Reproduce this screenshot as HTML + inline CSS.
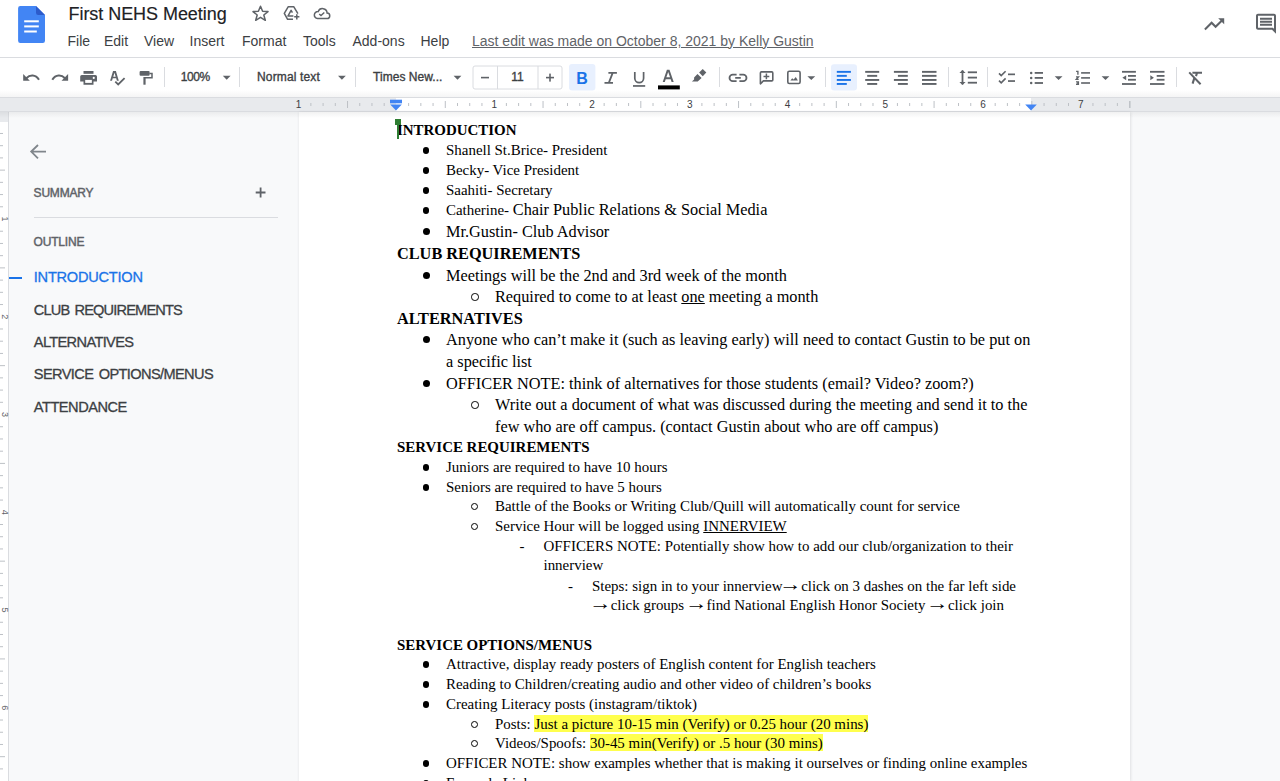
<!DOCTYPE html>
<html><head><meta charset="utf-8"><title>First NEHS Meeting</title>
<style>
html,body{margin:0;padding:0;}
body{width:1280px;height:781px;overflow:hidden;position:relative;background:#fff;}
.t{position:absolute;white-space:pre;line-height:0;}
.t b{font-weight:bold;}
.t u{text-decoration-thickness:1.3px;}
.hl{background:#ffff4d;padding-top:1px;}
.ar{display:inline-block;transform:translate(0.6px,-1.5px) scale(1.5,1.15);}
</style></head>
<body>
<div style="position:absolute;left:0px;top:0px;width:1280px;height:57px;background:#fff;"></div>
<div style="position:absolute;left:0px;top:57px;width:1280px;height:1px;background:#dadce0;"></div>
<div style="position:absolute;left:0px;top:58px;width:1280px;height:39px;background:#fff;"></div>
<div style="position:absolute;left:0px;top:97px;width:1280px;height:14px;background:#e8eaed;"></div>
<div style="position:absolute;left:0px;top:97px;width:1280px;height:1px;background:#dadce0;"></div>
<div style="position:absolute;left:396px;top:98px;width:635px;height:13px;background:#fff;"></div>
<div style="position:absolute;left:0px;top:111px;width:1280px;height:1px;background:#dadce0;"></div>
<div style="position:absolute;left:0px;top:112px;width:1280px;height:669px;background:#f8f9fa;"></div>
<div style="position:absolute;left:0px;top:112px;width:8px;height:669px;background:#fff;"></div>
<div style="position:absolute;left:0px;top:112px;width:8px;height:10px;background:#e8eaed;"></div>
<div style="position:absolute;left:8px;top:112px;width:1px;height:669px;background:#dadce0;"></div>
<div style="position:absolute;left:299px;top:112px;width:831px;height:669px;background:#fff;box-shadow:0 0 3px 0.5px rgba(60,64,67,.16);"></div>
<div style="position:absolute;left:0px;top:112px;width:1280px;height:6px;background:linear-gradient(rgba(60,64,67,.07),rgba(60,64,67,0));"></div>
<div style="position:absolute;left:0px;top:90px;width:1280px;height:7px;background:linear-gradient(rgba(60,64,67,0),rgba(60,64,67,.05));"></div>
<div id="hl-layer"></div>
<div class="t" style="left:397.00px;top:130.00px;font-size:14.94px;font-family:'Liberation Serif', serif;color:#000;font-weight:normal;"><b>INTRODUCTION</b></div>
<div style="position:absolute;left:422.70px;top:147.00px;width:6.8px;height:6.8px;border-radius:50%;background:#000"></div>
<div class="t" style="left:446.00px;top:150.00px;font-size:14.94px;font-family:'Liberation Serif', serif;color:#000;font-weight:normal;">Shanell St.Brice- President</div>
<div style="position:absolute;left:422.70px;top:167.00px;width:6.8px;height:6.8px;border-radius:50%;background:#000"></div>
<div class="t" style="left:446.00px;top:170.00px;font-size:14.94px;font-family:'Liberation Serif', serif;color:#000;font-weight:normal;">Becky- Vice President</div>
<div style="position:absolute;left:422.70px;top:187.00px;width:6.8px;height:6.8px;border-radius:50%;background:#000"></div>
<div class="t" style="left:446.00px;top:190.00px;font-size:14.94px;font-family:'Liberation Serif', serif;color:#000;font-weight:normal;">Saahiti- Secretary</div>
<div style="position:absolute;left:422.70px;top:207.00px;width:6.8px;height:6.8px;border-radius:50%;background:#000"></div>
<div class="t" style="left:446.00px;top:210.00px;font-size:14.94px;font-family:'Liberation Serif', serif;color:#000;font-weight:normal;">Catherine- <span style="font-size:16.29px">Chair Public Relations &amp; Social Media</span></div>
<div style="position:absolute;left:422.80px;top:228.00px;width:7.2px;height:7.2px;border-radius:50%;background:#000"></div>
<div class="t" style="left:446.00px;top:232.00px;font-size:16.29px;font-family:'Liberation Serif', serif;color:#000;font-weight:normal;">Mr.Gustin- Club Advisor</div>
<div class="t" style="left:397.00px;top:254.00px;font-size:16.29px;font-family:'Liberation Serif', serif;color:#000;font-weight:normal;"><b>CLUB REQUIREMENTS</b></div>
<div style="position:absolute;left:422.80px;top:272.00px;width:7.2px;height:7.2px;border-radius:50%;background:#000"></div>
<div class="t" style="left:446.00px;top:276.00px;font-size:16.29px;font-family:'Liberation Serif', serif;color:#000;font-weight:normal;">Meetings will be the 2nd and 3rd week of the month</div>
<div style="position:absolute;left:471.35px;top:293.25px;width:5.50px;height:5.50px;border-radius:50%;border:1px solid #000"></div>
<div class="t" style="left:495.00px;top:297.00px;font-size:16.29px;font-family:'Liberation Serif', serif;color:#000;font-weight:normal;">Required to come to at least <u>one</u> meeting a month</div>
<div class="t" style="left:397.00px;top:319.00px;font-size:16.29px;font-family:'Liberation Serif', serif;color:#000;font-weight:normal;"><b>ALTERNATIVES</b></div>
<div style="position:absolute;left:422.80px;top:336.00px;width:7.2px;height:7.2px;border-radius:50%;background:#000"></div>
<div class="t" style="left:446.00px;top:340.00px;font-size:16.29px;font-family:'Liberation Serif', serif;color:#000;font-weight:normal;">Anyone who can’t make it (such as leaving early) will need to contact Gustin to be put on</div>
<div class="t" style="left:446.00px;top:362.00px;font-size:16.29px;font-family:'Liberation Serif', serif;color:#000;font-weight:normal;">a specific list</div>
<div style="position:absolute;left:422.80px;top:380.00px;width:7.2px;height:7.2px;border-radius:50%;background:#000"></div>
<div class="t" style="left:446.00px;top:384.00px;font-size:16.29px;font-family:'Liberation Serif', serif;color:#000;font-weight:normal;">OFFICER NOTE: think of alternatives for those students (email? Video? zoom?)</div>
<div style="position:absolute;left:471.35px;top:401.25px;width:5.50px;height:5.50px;border-radius:50%;border:1px solid #000"></div>
<div class="t" style="left:495.00px;top:405.00px;font-size:16.29px;font-family:'Liberation Serif', serif;color:#000;font-weight:normal;">Write out a document of what was discussed during the meeting and send it to the</div>
<div class="t" style="left:495.00px;top:427.00px;font-size:16.29px;font-family:'Liberation Serif', serif;color:#000;font-weight:normal;">few who are off campus. (contact Gustin about who are off campus)</div>
<div class="t" style="left:397.00px;top:447.00px;font-size:14.94px;font-family:'Liberation Serif', serif;color:#000;font-weight:normal;"><b>SERVICE REQUIREMENTS</b></div>
<div style="position:absolute;left:422.70px;top:464.00px;width:6.8px;height:6.8px;border-radius:50%;background:#000"></div>
<div class="t" style="left:446.00px;top:467.00px;font-size:14.94px;font-family:'Liberation Serif', serif;color:#000;font-weight:normal;">Juniors are required to have 10 hours</div>
<div style="position:absolute;left:422.70px;top:484.00px;width:6.8px;height:6.8px;border-radius:50%;background:#000"></div>
<div class="t" style="left:446.00px;top:487.00px;font-size:14.94px;font-family:'Liberation Serif', serif;color:#000;font-weight:normal;">Seniors are required to have 5 hours</div>
<div style="position:absolute;left:471.25px;top:502.75px;width:4.90px;height:4.90px;border-radius:50%;border:1px solid #000"></div>
<div class="t" style="left:495.00px;top:506.00px;font-size:14.94px;font-family:'Liberation Serif', serif;color:#000;font-weight:normal;">Battle of the Books or Writing Club/Quill will automatically count for service</div>
<div style="position:absolute;left:471.25px;top:522.75px;width:4.90px;height:4.90px;border-radius:50%;border:1px solid #000"></div>
<div class="t" style="left:495.00px;top:526.00px;font-size:14.94px;font-family:'Liberation Serif', serif;color:#000;font-weight:normal;">Service Hour will be logged using <u>INNERVIEW</u></div>
<div class="t" style="left:519.50px;top:546.00px;font-size:14.94px;font-family:'Liberation Serif', serif;color:#000;font-weight:normal;">-</div>
<div class="t" style="left:543.50px;top:546.00px;font-size:14.94px;font-family:'Liberation Serif', serif;color:#000;font-weight:normal;">OFFICERS NOTE: Potentially show how to add our club/organization to their</div>
<div class="t" style="left:543.50px;top:565.00px;font-size:14.94px;font-family:'Liberation Serif', serif;color:#000;font-weight:normal;">innerview</div>
<div class="t" style="left:568.10px;top:586.00px;font-size:14.94px;font-family:'Liberation Serif', serif;color:#000;font-weight:normal;">-</div>
<div class="t" style="left:592.00px;top:586.00px;font-size:14.94px;font-family:'Liberation Serif', serif;color:#000;font-weight:normal;">Steps: sign in to your innerview<span class="ar">→</span> click on 3 dashes on the far left side</div>
<div class="t" style="left:592.00px;top:605.00px;font-size:14.94px;font-family:'Liberation Serif', serif;color:#000;font-weight:normal;"><span class="ar">→</span> click groups <span class="ar">→</span> find National English Honor Society <span class="ar">→</span> click join</div>
<div class="t" style="left:397.00px;top:645.00px;font-size:14.94px;font-family:'Liberation Serif', serif;color:#000;font-weight:normal;"><b>SERVICE OPTIONS/MENUS</b></div>
<div style="position:absolute;left:422.70px;top:661.00px;width:6.8px;height:6.8px;border-radius:50%;background:#000"></div>
<div class="t" style="left:446.00px;top:664.00px;font-size:14.94px;font-family:'Liberation Serif', serif;color:#000;font-weight:normal;">Attractive, display ready posters of English content for English teachers</div>
<div style="position:absolute;left:422.70px;top:681.00px;width:6.8px;height:6.8px;border-radius:50%;background:#000"></div>
<div class="t" style="left:446.00px;top:684.00px;font-size:14.94px;font-family:'Liberation Serif', serif;color:#000;font-weight:normal;">Reading to Children/creating audio and other video of children’s books</div>
<div style="position:absolute;left:422.70px;top:701.00px;width:6.8px;height:6.8px;border-radius:50%;background:#000"></div>
<div class="t" style="left:446.00px;top:704.00px;font-size:14.94px;font-family:'Liberation Serif', serif;color:#000;font-weight:normal;">Creating Literacy posts (instagram/tiktok)</div>
<div style="position:absolute;left:471.25px;top:720.75px;width:4.90px;height:4.90px;border-radius:50%;border:1px solid #000"></div>
<div class="t" style="left:495.00px;top:724.00px;font-size:14.94px;font-family:'Liberation Serif', serif;color:#000;font-weight:normal;">Posts: <span class="hl">Just a picture 10-15 min (Verify) or 0.25 hour (20 mins)</span></div>
<div style="position:absolute;left:471.25px;top:739.75px;width:4.90px;height:4.90px;border-radius:50%;border:1px solid #000"></div>
<div class="t" style="left:495.00px;top:743.00px;font-size:14.94px;font-family:'Liberation Serif', serif;color:#000;font-weight:normal;">Videos/Spoofs: <span class="hl">30-45 min(Verify) or .5 hour (30 mins)</span></div>
<div style="position:absolute;left:422.70px;top:760.00px;width:6.8px;height:6.8px;border-radius:50%;background:#000"></div>
<div class="t" style="left:446.00px;top:763.00px;font-size:14.94px;font-family:'Liberation Serif', serif;color:#000;font-weight:normal;">OFFICER NOTE: show examples whether that is making it ourselves or finding online examples</div>
<div style="position:absolute;left:422.70px;top:780.00px;width:6.8px;height:6.8px;border-radius:50%;background:#000"></div>
<div class="t" style="left:446.00px;top:783.00px;font-size:14.94px;font-family:'Liberation Serif', serif;color:#000;font-weight:normal;">Example Links</div>
<div style="position:absolute;left:395px;top:119px;width:6px;height:5.8px;background:#2e7d32;"></div>
<div style="position:absolute;left:397px;top:119px;width:2px;height:19.5px;background:#2e7d32;"></div>
<div class="t" style="left:68.50px;top:13.76px;font-size:18px;font-family:'Liberation Sans', sans-serif;color:#202124;font-weight:normal;letter-spacing:-0.05px;-webkit-text-stroke:0.15px #202124;">First NEHS Meeting</div>
<div class="t" style="left:67.50px;top:40.75px;font-size:14px;font-family:'Liberation Sans', sans-serif;color:#3c4043;font-weight:normal;">File</div>
<div class="t" style="left:104.00px;top:40.75px;font-size:14px;font-family:'Liberation Sans', sans-serif;color:#3c4043;font-weight:normal;">Edit</div>
<div class="t" style="left:144.00px;top:40.75px;font-size:14px;font-family:'Liberation Sans', sans-serif;color:#3c4043;font-weight:normal;">View</div>
<div class="t" style="left:189.50px;top:40.75px;font-size:14px;font-family:'Liberation Sans', sans-serif;color:#3c4043;font-weight:normal;">Insert</div>
<div class="t" style="left:242.00px;top:40.75px;font-size:14px;font-family:'Liberation Sans', sans-serif;color:#3c4043;font-weight:normal;">Format</div>
<div class="t" style="left:303.00px;top:40.75px;font-size:14px;font-family:'Liberation Sans', sans-serif;color:#3c4043;font-weight:normal;">Tools</div>
<div class="t" style="left:352.50px;top:40.75px;font-size:14px;font-family:'Liberation Sans', sans-serif;color:#3c4043;font-weight:normal;">Add-ons</div>
<div class="t" style="left:420.50px;top:40.75px;font-size:14px;font-family:'Liberation Sans', sans-serif;color:#3c4043;font-weight:normal;">Help</div>
<div class="t" style="left:472.00px;top:40.75px;font-size:14px;font-family:'Liberation Sans', sans-serif;color:#5f6368;font-weight:normal;text-decoration:underline;">Last edit was made on October 8, 2021 by Kelly Gustin</div>
<div class="t" style="left:180.80px;top:77.14px;font-size:12px;font-family:'Liberation Sans', sans-serif;color:#3c4043;font-weight:normal;-webkit-text-stroke:0.35px #3c4043;letter-spacing:-0.45px;">100%</div>
<div class="t" style="left:257.00px;top:77.14px;font-size:12px;font-family:'Liberation Sans', sans-serif;color:#3c4043;font-weight:normal;-webkit-text-stroke:0.35px #3c4043;letter-spacing:0.15px;">Normal text</div>
<div class="t" style="left:373.00px;top:77.14px;font-size:12px;font-family:'Liberation Sans', sans-serif;color:#3c4043;font-weight:normal;-webkit-text-stroke:0.35px #3c4043;letter-spacing:0.05px;">Times New...</div>
<div class="t" style="left:511.20px;top:77.14px;font-size:12px;font-family:'Liberation Sans', sans-serif;color:#3c4043;font-weight:normal;-webkit-text-stroke:0.35px #3c4043;">11</div>
<div class="t" style="left:33.60px;top:192.54px;font-size:12px;font-family:'Liberation Sans', sans-serif;color:#5f6368;font-weight:normal;letter-spacing:-0.2px;-webkit-text-stroke:0.45px #5f6368;">SUMMARY</div>
<div class="t" style="left:33.60px;top:242.44px;font-size:12px;font-family:'Liberation Sans', sans-serif;color:#5f6368;font-weight:normal;letter-spacing:-0.2px;-webkit-text-stroke:0.45px #5f6368;">OUTLINE</div>
<div style="position:absolute;left:33.6px;top:217px;width:244px;height:1px;background:#dadce0;"></div>
<div class="t" style="left:33.80px;top:277.04px;font-size:14.6px;font-family:'Liberation Sans', sans-serif;color:#1a73e8;font-weight:normal;letter-spacing:-0.25px;word-spacing:2px;-webkit-text-stroke:0.3px #1a73e8;">INTRODUCTION</div>
<div class="t" style="left:33.80px;top:309.84px;font-size:14.6px;font-family:'Liberation Sans', sans-serif;color:#3c4043;font-weight:normal;letter-spacing:-0.85px;word-spacing:2px;-webkit-text-stroke:0.3px #3c4043;">CLUB REQUIREMENTS</div>
<div class="t" style="left:33.80px;top:341.94px;font-size:14.6px;font-family:'Liberation Sans', sans-serif;color:#3c4043;font-weight:normal;letter-spacing:-0.65px;word-spacing:2px;-webkit-text-stroke:0.3px #3c4043;">ALTERNATIVES</div>
<div class="t" style="left:33.80px;top:374.34px;font-size:14.6px;font-family:'Liberation Sans', sans-serif;color:#3c4043;font-weight:normal;letter-spacing:-0.62px;word-spacing:2px;-webkit-text-stroke:0.3px #3c4043;">SERVICE OPTIONS/MENUS</div>
<div class="t" style="left:33.80px;top:407.14px;font-size:14.6px;font-family:'Liberation Sans', sans-serif;color:#3c4043;font-weight:normal;letter-spacing:-0.48px;word-spacing:2px;-webkit-text-stroke:0.3px #3c4043;">ATTENDANCE</div>
<div style="position:absolute;left:9px;top:276.5px;width:13px;height:2px;background:#1a73e8;"></div>
<svg width="1280" height="781" style="position:absolute;left:0;top:0;pointer-events:none">
<rect x="310.36" y="103" width="1" height="3" fill="#bdc1c6"/>
<rect x="322.58" y="103" width="1" height="3" fill="#bdc1c6"/>
<rect x="334.80" y="103" width="1" height="3" fill="#bdc1c6"/>
<rect x="347.02" y="101" width="1" height="7" fill="#bdc1c6"/>
<rect x="359.24" y="103" width="1" height="3" fill="#bdc1c6"/>
<rect x="371.46" y="103" width="1" height="3" fill="#bdc1c6"/>
<rect x="383.68" y="103" width="1" height="3" fill="#bdc1c6"/>
<rect x="408.12" y="103" width="1" height="3" fill="#bdc1c6"/>
<rect x="420.34" y="103" width="1" height="3" fill="#bdc1c6"/>
<rect x="432.56" y="103" width="1" height="3" fill="#bdc1c6"/>
<rect x="444.78" y="101" width="1" height="7" fill="#bdc1c6"/>
<rect x="457.00" y="103" width="1" height="3" fill="#bdc1c6"/>
<rect x="469.22" y="103" width="1" height="3" fill="#bdc1c6"/>
<rect x="481.44" y="103" width="1" height="3" fill="#bdc1c6"/>
<rect x="505.88" y="103" width="1" height="3" fill="#bdc1c6"/>
<rect x="518.10" y="103" width="1" height="3" fill="#bdc1c6"/>
<rect x="530.32" y="103" width="1" height="3" fill="#bdc1c6"/>
<rect x="542.54" y="101" width="1" height="7" fill="#bdc1c6"/>
<rect x="554.76" y="103" width="1" height="3" fill="#bdc1c6"/>
<rect x="566.98" y="103" width="1" height="3" fill="#bdc1c6"/>
<rect x="579.20" y="103" width="1" height="3" fill="#bdc1c6"/>
<rect x="603.64" y="103" width="1" height="3" fill="#bdc1c6"/>
<rect x="615.86" y="103" width="1" height="3" fill="#bdc1c6"/>
<rect x="628.08" y="103" width="1" height="3" fill="#bdc1c6"/>
<rect x="640.30" y="101" width="1" height="7" fill="#bdc1c6"/>
<rect x="652.52" y="103" width="1" height="3" fill="#bdc1c6"/>
<rect x="664.74" y="103" width="1" height="3" fill="#bdc1c6"/>
<rect x="676.96" y="103" width="1" height="3" fill="#bdc1c6"/>
<rect x="701.40" y="103" width="1" height="3" fill="#bdc1c6"/>
<rect x="713.62" y="103" width="1" height="3" fill="#bdc1c6"/>
<rect x="725.84" y="103" width="1" height="3" fill="#bdc1c6"/>
<rect x="738.06" y="101" width="1" height="7" fill="#bdc1c6"/>
<rect x="750.28" y="103" width="1" height="3" fill="#bdc1c6"/>
<rect x="762.50" y="103" width="1" height="3" fill="#bdc1c6"/>
<rect x="774.72" y="103" width="1" height="3" fill="#bdc1c6"/>
<rect x="799.16" y="103" width="1" height="3" fill="#bdc1c6"/>
<rect x="811.38" y="103" width="1" height="3" fill="#bdc1c6"/>
<rect x="823.60" y="103" width="1" height="3" fill="#bdc1c6"/>
<rect x="835.82" y="101" width="1" height="7" fill="#bdc1c6"/>
<rect x="848.04" y="103" width="1" height="3" fill="#bdc1c6"/>
<rect x="860.26" y="103" width="1" height="3" fill="#bdc1c6"/>
<rect x="872.48" y="103" width="1" height="3" fill="#bdc1c6"/>
<rect x="896.92" y="103" width="1" height="3" fill="#bdc1c6"/>
<rect x="909.14" y="103" width="1" height="3" fill="#bdc1c6"/>
<rect x="921.36" y="103" width="1" height="3" fill="#bdc1c6"/>
<rect x="933.58" y="101" width="1" height="7" fill="#bdc1c6"/>
<rect x="945.80" y="103" width="1" height="3" fill="#bdc1c6"/>
<rect x="958.02" y="103" width="1" height="3" fill="#bdc1c6"/>
<rect x="970.24" y="103" width="1" height="3" fill="#bdc1c6"/>
<rect x="994.68" y="103" width="1" height="3" fill="#bdc1c6"/>
<rect x="1006.90" y="103" width="1" height="3" fill="#bdc1c6"/>
<rect x="1019.12" y="103" width="1" height="3" fill="#bdc1c6"/>
<rect x="1031.34" y="101" width="1" height="7" fill="#bdc1c6"/>
<rect x="1043.56" y="103" width="1" height="3" fill="#bdc1c6"/>
<rect x="1055.78" y="103" width="1" height="3" fill="#bdc1c6"/>
<rect x="1068.00" y="103" width="1" height="3" fill="#bdc1c6"/>
<rect x="1092.44" y="103" width="1" height="3" fill="#bdc1c6"/>
<rect x="1104.66" y="103" width="1" height="3" fill="#bdc1c6"/>
<rect x="1116.88" y="103" width="1" height="3" fill="#bdc1c6"/>
<rect x="1129.10" y="101" width="1" height="7" fill="#bdc1c6"/>
<rect x="0" y="132.96" width="3" height="1" fill="#bdc1c6"/>
<rect x="0" y="145.18" width="3" height="1" fill="#bdc1c6"/>
<rect x="0" y="157.40" width="3" height="1" fill="#bdc1c6"/>
<rect x="0" y="169.62" width="5" height="1" fill="#bdc1c6"/>
<rect x="0" y="181.84" width="3" height="1" fill="#bdc1c6"/>
<rect x="0" y="194.06" width="3" height="1" fill="#bdc1c6"/>
<rect x="0" y="206.28" width="3" height="1" fill="#bdc1c6"/>
<rect x="0" y="230.72" width="3" height="1" fill="#bdc1c6"/>
<rect x="0" y="242.94" width="3" height="1" fill="#bdc1c6"/>
<rect x="0" y="255.16" width="3" height="1" fill="#bdc1c6"/>
<rect x="0" y="267.38" width="5" height="1" fill="#bdc1c6"/>
<rect x="0" y="279.60" width="3" height="1" fill="#bdc1c6"/>
<rect x="0" y="291.82" width="3" height="1" fill="#bdc1c6"/>
<rect x="0" y="304.04" width="3" height="1" fill="#bdc1c6"/>
<rect x="0" y="328.48" width="3" height="1" fill="#bdc1c6"/>
<rect x="0" y="340.70" width="3" height="1" fill="#bdc1c6"/>
<rect x="0" y="352.92" width="3" height="1" fill="#bdc1c6"/>
<rect x="0" y="365.14" width="5" height="1" fill="#bdc1c6"/>
<rect x="0" y="377.36" width="3" height="1" fill="#bdc1c6"/>
<rect x="0" y="389.58" width="3" height="1" fill="#bdc1c6"/>
<rect x="0" y="401.80" width="3" height="1" fill="#bdc1c6"/>
<rect x="0" y="426.24" width="3" height="1" fill="#bdc1c6"/>
<rect x="0" y="438.46" width="3" height="1" fill="#bdc1c6"/>
<rect x="0" y="450.68" width="3" height="1" fill="#bdc1c6"/>
<rect x="0" y="462.90" width="5" height="1" fill="#bdc1c6"/>
<rect x="0" y="475.12" width="3" height="1" fill="#bdc1c6"/>
<rect x="0" y="487.34" width="3" height="1" fill="#bdc1c6"/>
<rect x="0" y="499.56" width="3" height="1" fill="#bdc1c6"/>
<rect x="0" y="524.00" width="3" height="1" fill="#bdc1c6"/>
<rect x="0" y="536.22" width="3" height="1" fill="#bdc1c6"/>
<rect x="0" y="548.44" width="3" height="1" fill="#bdc1c6"/>
<rect x="0" y="560.66" width="5" height="1" fill="#bdc1c6"/>
<rect x="0" y="572.88" width="3" height="1" fill="#bdc1c6"/>
<rect x="0" y="585.10" width="3" height="1" fill="#bdc1c6"/>
<rect x="0" y="597.32" width="3" height="1" fill="#bdc1c6"/>
<rect x="0" y="621.76" width="3" height="1" fill="#bdc1c6"/>
<rect x="0" y="633.98" width="3" height="1" fill="#bdc1c6"/>
<rect x="0" y="646.20" width="3" height="1" fill="#bdc1c6"/>
<rect x="0" y="658.42" width="5" height="1" fill="#bdc1c6"/>
<rect x="0" y="670.64" width="3" height="1" fill="#bdc1c6"/>
<rect x="0" y="682.86" width="3" height="1" fill="#bdc1c6"/>
<rect x="0" y="695.08" width="3" height="1" fill="#bdc1c6"/>
<rect x="0" y="719.52" width="3" height="1" fill="#bdc1c6"/>
<rect x="0" y="731.74" width="3" height="1" fill="#bdc1c6"/>
<rect x="0" y="743.96" width="3" height="1" fill="#bdc1c6"/>
<rect x="0" y="756.18" width="5" height="1" fill="#bdc1c6"/>
<rect x="0" y="768.40" width="3" height="1" fill="#bdc1c6"/>
<text x="298.64" y="108.2" font-size="10" text-anchor="middle" fill="#3c4043" font-family="Liberation Sans">1</text>
<text x="494.16" y="108.2" font-size="10" text-anchor="middle" fill="#3c4043" font-family="Liberation Sans">1</text>
<text x="591.92" y="108.2" font-size="10" text-anchor="middle" fill="#3c4043" font-family="Liberation Sans">2</text>
<text x="689.68" y="108.2" font-size="10" text-anchor="middle" fill="#3c4043" font-family="Liberation Sans">3</text>
<text x="787.44" y="108.2" font-size="10" text-anchor="middle" fill="#3c4043" font-family="Liberation Sans">4</text>
<text x="885.20" y="108.2" font-size="10" text-anchor="middle" fill="#3c4043" font-family="Liberation Sans">5</text>
<text x="982.96" y="108.2" font-size="10" text-anchor="middle" fill="#3c4043" font-family="Liberation Sans">6</text>
<text x="1080.72" y="108.2" font-size="10" text-anchor="middle" fill="#3c4043" font-family="Liberation Sans">7</text>
<text x="0" y="0" font-size="9" text-anchor="middle" fill="#5f6368" font-family="Liberation Sans" transform="translate(4.5,219.00) rotate(90) translate(0,3)">1</text>
<text x="0" y="0" font-size="9" text-anchor="middle" fill="#5f6368" font-family="Liberation Sans" transform="translate(4.5,316.76) rotate(90) translate(0,3)">2</text>
<text x="0" y="0" font-size="9" text-anchor="middle" fill="#5f6368" font-family="Liberation Sans" transform="translate(4.5,414.52) rotate(90) translate(0,3)">3</text>
<text x="0" y="0" font-size="9" text-anchor="middle" fill="#5f6368" font-family="Liberation Sans" transform="translate(4.5,512.28) rotate(90) translate(0,3)">4</text>
<text x="0" y="0" font-size="9" text-anchor="middle" fill="#5f6368" font-family="Liberation Sans" transform="translate(4.5,610.04) rotate(90) translate(0,3)">5</text>
<text x="0" y="0" font-size="9" text-anchor="middle" fill="#5f6368" font-family="Liberation Sans" transform="translate(4.5,707.80) rotate(90) translate(0,3)">6</text>
<rect x="390" y="99.7" width="12" height="3.6" fill="#4285f4"/>
<path d="M390.2 104.6 H401.8 L396 110.6 Z" fill="#4285f4"/>
<path d="M1025.2 104.6 H1036.8 L1031 110.6 Z" fill="#4285f4"/>
<rect x="1129.5" y="101" width="1" height="7" fill="#bdc1c6"/>


<!-- docs logo -->
<path d="M20.3 6 H36 L45 15 V40.7 a2.2 2.2 0 0 1 -2.2 2.2 H20.3 a2.2 2.2 0 0 1 -2.2 -2.2 V8.2 a2.2 2.2 0 0 1 2.2 -2.2 Z" fill="#4285f4"/>
<path d="M36 6 L45 15 H38.2 a2.2 2.2 0 0 1 -2.2 -2.2 Z" fill="#2a56c6" opacity="0.9"/>
<rect x="24.2" y="20.3" width="14.6" height="2" fill="#fff"/>
<rect x="24.2" y="25.4" width="14.6" height="2" fill="#fff"/>
<rect x="24.2" y="30.5" width="12.6" height="2" fill="#fff"/>
<!-- star -->
<path d="M260.5 6.2 L262.6 11.3 L268 11.6 L263.8 15 L265.3 20.3 L260.5 17.3 L255.7 20.3 L257.2 15 L253 11.6 L258.4 11.3 Z" fill="none" stroke="#5f6368" stroke-width="1.5" stroke-linejoin="round"/>
<!-- drive add -->
<path d="M293 19.3 H287.6 L284.3 13.3 L288.3 6.7 H293.7 L297.9 13.7" fill="none" stroke="#5f6368" stroke-width="1.5" stroke-linejoin="round"/>
<path d="M293.4 16.1 H287.9 L291.1 10.4 L292.4 12.6" fill="none" stroke="#5f6368" stroke-width="1.5" stroke-linejoin="round"/>
<path d="M296.8 14.2 V19.4 M294.2 16.8 H299.4" stroke="#5f6368" stroke-width="1.5"/>
<!-- cloud -->
<path d="M317.5 18.6 H326.8 a2.8 2.8 0 0 0 0.3 -5.6 a4.6 4.6 0 0 0 -8.9 -1.4 a3.5 3.5 0 0 0 -0.7 7 Z" fill="none" stroke="#5f6368" stroke-width="1.5"/>
<path d="M319.2 13.9 L321 15.6 L324.3 12.4" fill="none" stroke="#5f6368" stroke-width="1.4"/>
<!-- trending -->
<path transform="translate(1202.2,12.2)" d="M16 6l2.29 2.29-4.88 4.88-4-4L2 16.59 3.41 18l6-6 4 4 6.3-6.29L22 12V6z" fill="#5f6368"/>
<!-- comment -->
<path transform="translate(1254,11.7)" d="M21.99 4c0-1.1-.89-2-1.99-2H4c-1.1 0-2 .9-2 2v12c0 1.1.9 2 2 2h14l4 4-.01-18zM20 4v13.17L18.83 16H4V4h16zM6 12h12v2H6zm0-3h12v2H6zm0-3h12v2H6z" fill="#5f6368"/>

<!-- undo -->
<g>
<path d="M23.2 74.1 V80.7 H29.8 Z" fill="#5f6368"/>
<path d="M26.3 78.2 C 29.8 74.6, 35.6 74.2, 39 79.8" fill="none" stroke="#5f6368" stroke-width="2"/>
</g>
<g transform="translate(91.3,0) scale(-1,1)">
<path d="M23.2 74.1 V80.7 H29.8 Z" fill="#5f6368"/>
<path d="M26.3 78.2 C 29.8 74.6, 35.6 74.2, 39 79.8" fill="none" stroke="#5f6368" stroke-width="2"/>
</g>
<!-- print -->
<rect x="83.5" y="71" width="10" height="2.8" fill="#5f6368"/>
<path d="M81.8 75 H95.4 a1.6 1.6 0 0 1 1.6 1.6 V81.6 H93.5 V84.8 H83.5 V81.6 H80.2 V76.6 a1.6 1.6 0 0 1 1.6 -1.6 Z" fill="#5f6368"/>
<rect x="85.2" y="79.9" width="6.65" height="3" fill="#fff"/>
<circle cx="93.75" cy="77.9" r="1.05" fill="#fff"/>
<!-- spellcheck -->
<path fill-rule="evenodd" d="M110.1 80.7 L113.05 70.95 H115.9 L118.8 80.7 H116.9 L116.15 78.25 H112.75 L112 80.7 Z M113.25 76.8 H115.7 L114.47 72.7 Z" fill="#5f6368"/>
<path d="M115.3 81.7 L118.2 84.5 L124.6 78.1" fill="none" stroke="#5f6368" stroke-width="1.8"/>
<!-- paint format -->
<rect x="139.6" y="71" width="10" height="4.7" rx="1" fill="#5f6368"/>
<path d="M149.4 73.6 H152 V77.75 H144.5" fill="none" stroke="#5f6368" stroke-width="1.5"/>
<rect x="143.4" y="77" width="2.2" height="7.7" fill="#5f6368"/>
<!-- separators -->
<rect x="164" y="67" width="1" height="20" fill="#dadce0"/>
<rect x="239" y="67" width="1" height="20" fill="#dadce0"/>
<rect x="355" y="67" width="1" height="20" fill="#dadce0"/>
<rect x="719" y="67" width="1" height="20" fill="#dadce0"/>
<rect x="825" y="67" width="1" height="20" fill="#dadce0"/>
<rect x="948" y="67" width="1" height="20" fill="#dadce0"/>
<rect x="987" y="67" width="1" height="20" fill="#dadce0"/>
<rect x="1176" y="67" width="1" height="20" fill="#dadce0"/>
<!-- dropdown arrows -->
<path d="M222.8 75.8 H230.6 L226.7 79.7 Z" fill="#5f6368"/>
<path d="M338 75.8 H345.8 L341.9 79.7 Z" fill="#5f6368"/>
<path d="M453.6 75.8 H461.4 L457.5 79.7 Z" fill="#5f6368"/>
<path d="M807.4 76.2 H815.2 L811.3 80.1 Z" fill="#5f6368"/>
<path d="M1054.7 76.2 H1062.5 L1058.6 80.1 Z" fill="#5f6368"/>
<path d="M1101.6 76.2 H1109.4 L1105.5 80.1 Z" fill="#5f6368"/>
<!-- font size box -->
<rect x="473" y="66" width="89" height="23" rx="2" fill="none" stroke="#dadce0" stroke-width="1"/>
<rect x="497" y="66" width="1" height="23" fill="#dadce0"/>
<rect x="537.5" y="66" width="1" height="23" fill="#dadce0"/>
<rect x="481" y="76.8" width="8" height="1.6" fill="#5f6368"/>
<rect x="546" y="76.8" width="8" height="1.6" fill="#5f6368"/>
<rect x="549.2" y="73.6" width="1.6" height="8" fill="#5f6368"/>
<!-- bold bg -->
<rect x="569" y="64" width="26.4" height="26.5" rx="3" fill="#e8f0fe"/>
<!-- italic -->
<path d="M608.4 72.8 H616.9 M604.5 82.8 H613 M612.7 72.8 L608.8 82.8" fill="none" stroke="#5f6368" stroke-width="1.8"/>
<!-- underline -->
<path d="M634.8 71.9 V78.3 a4.4 4.4 0 0 0 8.8 0 V71.9" fill="none" stroke="#5f6368" stroke-width="1.7"/>
<rect x="633" y="85.1" width="12.2" height="1.7" fill="#5f6368"/>
<!-- text color -->
<path fill-rule="evenodd" d="M662.7 81.9 L666.9 69.7 H669.5 L673.7 81.9 H671.6 L670.7 79.2 H665.7 L664.8 81.9 Z M666.35 77.3 H670.05 L668.2 71.9 Z" fill="#5f6368"/>
<rect x="658" y="85.4" width="21.8" height="4" fill="#000"/>
<!-- highlighter -->
<path d="M702.75 69.1 L706.3 72.6 L702.75 76.2 L699.1 72.6 Z" fill="#5f6368"/>
<path d="M697.5 74.1 L701.6 78 L697.7 81.6 L691.9 81.6 L694.1 79.4 L694.1 77.4 Z" fill="#5f6368"/>
<!-- link -->
<path d="M736.6 74.6 H732.8 a3.3 3.3 0 0 0 0 6.6 H736.6 M739.4 74.6 H743.2 a3.3 3.3 0 0 1 0 6.6 H739.4 M735.2 77.9 H740.8" fill="none" stroke="#5f6368" stroke-width="1.8"/>
<!-- add comment -->
<path d="M761.2 71.9 H771.8 a1 1 0 0 1 1 1 V79.9 a1 1 0 0 1 -1 1 H763.4 L760.4 83.8 V72.9 a1 1 0 0 1 1 -1 Z" fill="none" stroke="#5f6368" stroke-width="1.6" stroke-linejoin="round"/>
<path d="M763.5 76.4 H769.3 M766.4 73.6 V79.2" stroke="#5f6368" stroke-width="1.5"/>
<!-- image -->
<rect x="787.8" y="71.2" width="12.3" height="12.3" rx="1.5" fill="none" stroke="#5f6368" stroke-width="1.6"/>
<path d="M790.4 80.6 L792.2 78.2 L793.6 79.6 L795.8 76.9 L797.9 80.6 Z" fill="#5f6368"/>
<!-- align -->
<rect x="831" y="64.2" width="26" height="26.2" rx="3" fill="#e8f0fe"/>
<g fill="#1a73e8">
<rect x="836.8" y="70.9" width="14.1" height="1.9"/><rect x="836.8" y="74.9" width="10" height="1.9"/><rect x="836.8" y="79" width="14.1" height="1.9"/><rect x="836.8" y="83" width="10" height="1.9"/>
</g>
<g fill="#5f6368">
<rect x="865.2" y="70.9" width="14" height="1.9"/><rect x="867.2" y="74.9" width="10" height="1.9"/><rect x="865.2" y="79" width="14" height="1.9"/><rect x="867.2" y="83" width="10" height="1.9"/>
<rect x="893.9" y="70.9" width="13.9" height="1.9"/><rect x="897.9" y="74.9" width="9.9" height="1.9"/><rect x="893.9" y="79" width="13.9" height="1.9"/><rect x="897.9" y="83" width="9.9" height="1.9"/>
<rect x="922" y="70.9" width="14.5" height="1.9"/><rect x="922" y="74.9" width="14.5" height="1.9"/><rect x="922" y="79" width="14.5" height="1.9"/><rect x="922" y="83" width="14.5" height="1.9"/>
</g>
<!-- line spacing -->
<path d="M962.5 70.5 V84.3" stroke="#5f6368" stroke-width="1.8"/>
<path d="M959.4 73 L962.5 69.9 L965.6 73 Z M959.4 81.9 L962.5 85 L965.6 81.9 Z" fill="#5f6368"/>
<g fill="#5f6368"><rect x="967.8" y="71.4" width="9.2" height="1.8"/><rect x="967.8" y="76.7" width="9.2" height="1.8"/><rect x="967.8" y="81.8" width="9.2" height="1.8"/></g>
<!-- checklist -->
<path d="M999 73.4 L1001.2 75.6 L1005.6 71.2 M999 80.6 L1001.2 82.8 L1005.6 78.4" fill="none" stroke="#5f6368" stroke-width="1.6"/>
<g fill="#5f6368"><rect x="1008" y="73.5" width="7" height="1.7"/><rect x="1008" y="80.2" width="7" height="1.7"/></g>
<!-- bullets -->
<g fill="#5f6368">
<circle cx="1031.2" cy="72.9" r="1.25"/><circle cx="1031.2" cy="77.9" r="1.25"/><circle cx="1031.2" cy="83" r="1.25"/>
<rect x="1034.7" y="72" width="8.3" height="1.8"/><rect x="1034.7" y="77" width="8.3" height="1.8"/><rect x="1034.7" y="82.1" width="8.3" height="1.8"/>
</g>
<!-- numbered -->
<path d="M1076.1 71.4 H1077.9 V74.8 M1076 76.8 H1078.5 L1076.3 79.3 H1078.7 M1076 81.8 H1078.4 V84.2 H1076 M1077.2 83 H1078.4" fill="none" stroke="#5f6368" stroke-width="1.35"/>
<g fill="#5f6368"><rect x="1081.1" y="72.1" width="8.9" height="1.6"/><rect x="1081.1" y="77.1" width="8.9" height="1.6"/><rect x="1081.1" y="82.2" width="8.9" height="1.6"/></g>
<!-- decrease indent -->
<g fill="#5f6368">
<rect x="1122" y="70.9" width="13.9" height="1.8"/><rect x="1128" y="75" width="7.9" height="1.8"/><rect x="1128" y="78.85" width="7.9" height="1.8"/><rect x="1122" y="83.1" width="13.9" height="1.8"/>
<path d="M1126.2 75.3 V80.3 L1122.4 77.8 Z"/>
<rect x="1150" y="70.9" width="14.5" height="1.8"/><rect x="1156.7" y="75" width="7.8" height="1.8"/><rect x="1156.7" y="78.85" width="7.8" height="1.8"/><rect x="1150" y="83.1" width="14.5" height="1.8"/>
<path d="M1150.3 75.3 V80.3 L1153.9 77.8 Z"/>
</g>
<!-- clear formatting -->
<path d="M1192.4 72.8 H1202 M1196.9 73.3 L1196 76.1 M1194.4 77.9 L1192.6 83.6" fill="none" stroke="#5f6368" stroke-width="2.1"/>
<path d="M1189.2 72.4 L1200.6 84.3" fill="none" stroke="#5f6368" stroke-width="2"/>

<!-- sidebar back arrow -->
<path d="M46 151.6 H31.5 M38 145 L31.2 151.6 L38 158.3" fill="none" stroke="#80868b" stroke-width="1.8"/>
<!-- plus -->
<path d="M260.6 187.6 V197.4 M255.7 192.5 H265.5" stroke="#5f6368" stroke-width="1.8"/>

</svg>
<div class="t" style="left:576.2px;top:79px;font-size:16px;font-family:'Liberation Sans', sans-serif;font-weight:bold;color:#1a73e8">B</div>
</body></html>
